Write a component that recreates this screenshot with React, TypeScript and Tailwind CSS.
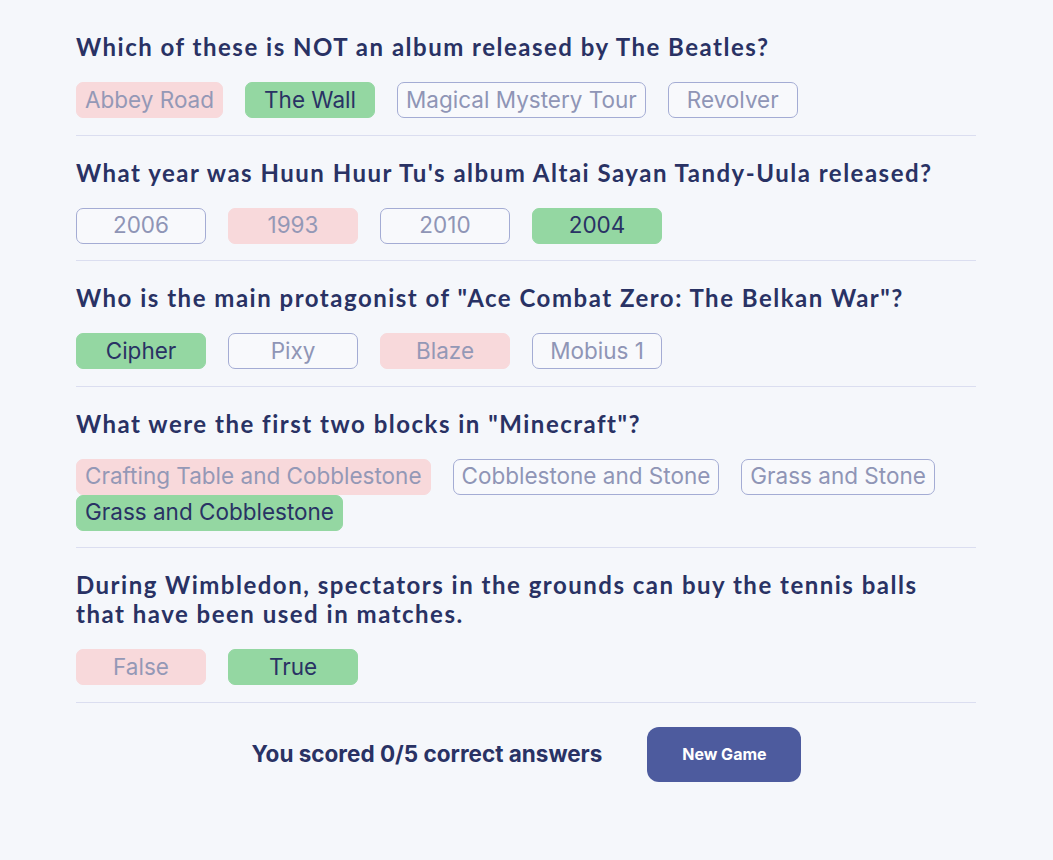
import { useState } from "react";

type Question = {
  question: string;
  answers: string[];
  correct: string;
  picked: string;
};

const questions: Question[] = [
  {
    question: "Which of these is NOT an album released by The Beatles?",
    answers: ["Abbey Road", "The Wall", "Magical Mystery Tour", "Revolver"],
    correct: "The Wall",
    picked: "Abbey Road",
  },
  {
    question: "What year was Huun Huur Tu's album Altai Sayan Tandy-Uula released?",
    answers: ["2006", "1993", "2010", "2004"],
    correct: "2004",
    picked: "1993",
  },
  {
    question: 'Who is the main protagonist of "Ace Combat Zero: The Belkan War"?',
    answers: ["Cipher", "Pixy", "Blaze", "Mobius 1"],
    correct: "Cipher",
    picked: "Blaze",
  },
  {
    question: 'What were the first two blocks in "Minecraft"?',
    answers: [
      "Crafting Table and Cobblestone",
      "Cobblestone and Stone",
      "Grass and Stone",
      "Grass and Cobblestone",
    ],
    correct: "Grass and Cobblestone",
    picked: "Crafting Table and Cobblestone",
  },
  {
    question:
      "During Wimbledon, spectators in the grounds can buy the tennis balls that have been used in matches.",
    answers: ["False", "True"],
    correct: "True",
    picked: "False",
  },
];

function Answer({ text, q }: { text: string; q: Question }) {
  let cls = "border border-[#A4ACD4] bg-[#F8F9FC] text-[#8F95B6]";
  if (text === q.correct) cls = "border border-[#94D7A2] bg-[#94D7A2] text-[#293264]";
  else if (text === q.picked) cls = "border border-[#F8D9DB] bg-[#F8D9DB] text-[#9498B6]";
  return (
    <button
      className={`h-[36px] min-w-[130px] px-2 mr-[22px] rounded-[7px] text-[22.5px] leading-none ${cls}`}
    >
      {text}
    </button>
  );
}

export default function App() {
  const [score] = useState(0);

  return (
    <div
      className="min-h-screen bg-[#F5F7FB] text-[#293264]"
      style={{ fontFamily: "Inter, 'Noto Sans', sans-serif" }}
    >
      <div className="w-[900px] ml-[76px] pt-[10px]">
        {questions.map((q, i) => (
          <div key={i} className="pt-[22px] pb-[16.5px] border-b border-[#DBDEF0]">
            <h2 className="pr-[12px] font-['Lato',sans-serif] font-bold text-[24px] leading-[29px] tracking-[1.5px]">
              {q.question}
            </h2>
            <div className="mt-[21px] flex flex-wrap">
              {q.answers.map((a) => (
                <Answer key={a} text={a} q={q} />
              ))}
            </div>
          </div>
        ))}
      </div>
      <div className="flex items-center justify-center gap-[45px] mt-[24px]">
        <p className="text-[22.5px] font-bold">You scored {score}/5 correct answers</p>
        <button className="w-[154px] h-[55px] rounded-[12px] bg-[#4D5B9E] text-white text-[16px] font-bold">
          New Game
        </button>
      </div>
    </div>
  );
}
